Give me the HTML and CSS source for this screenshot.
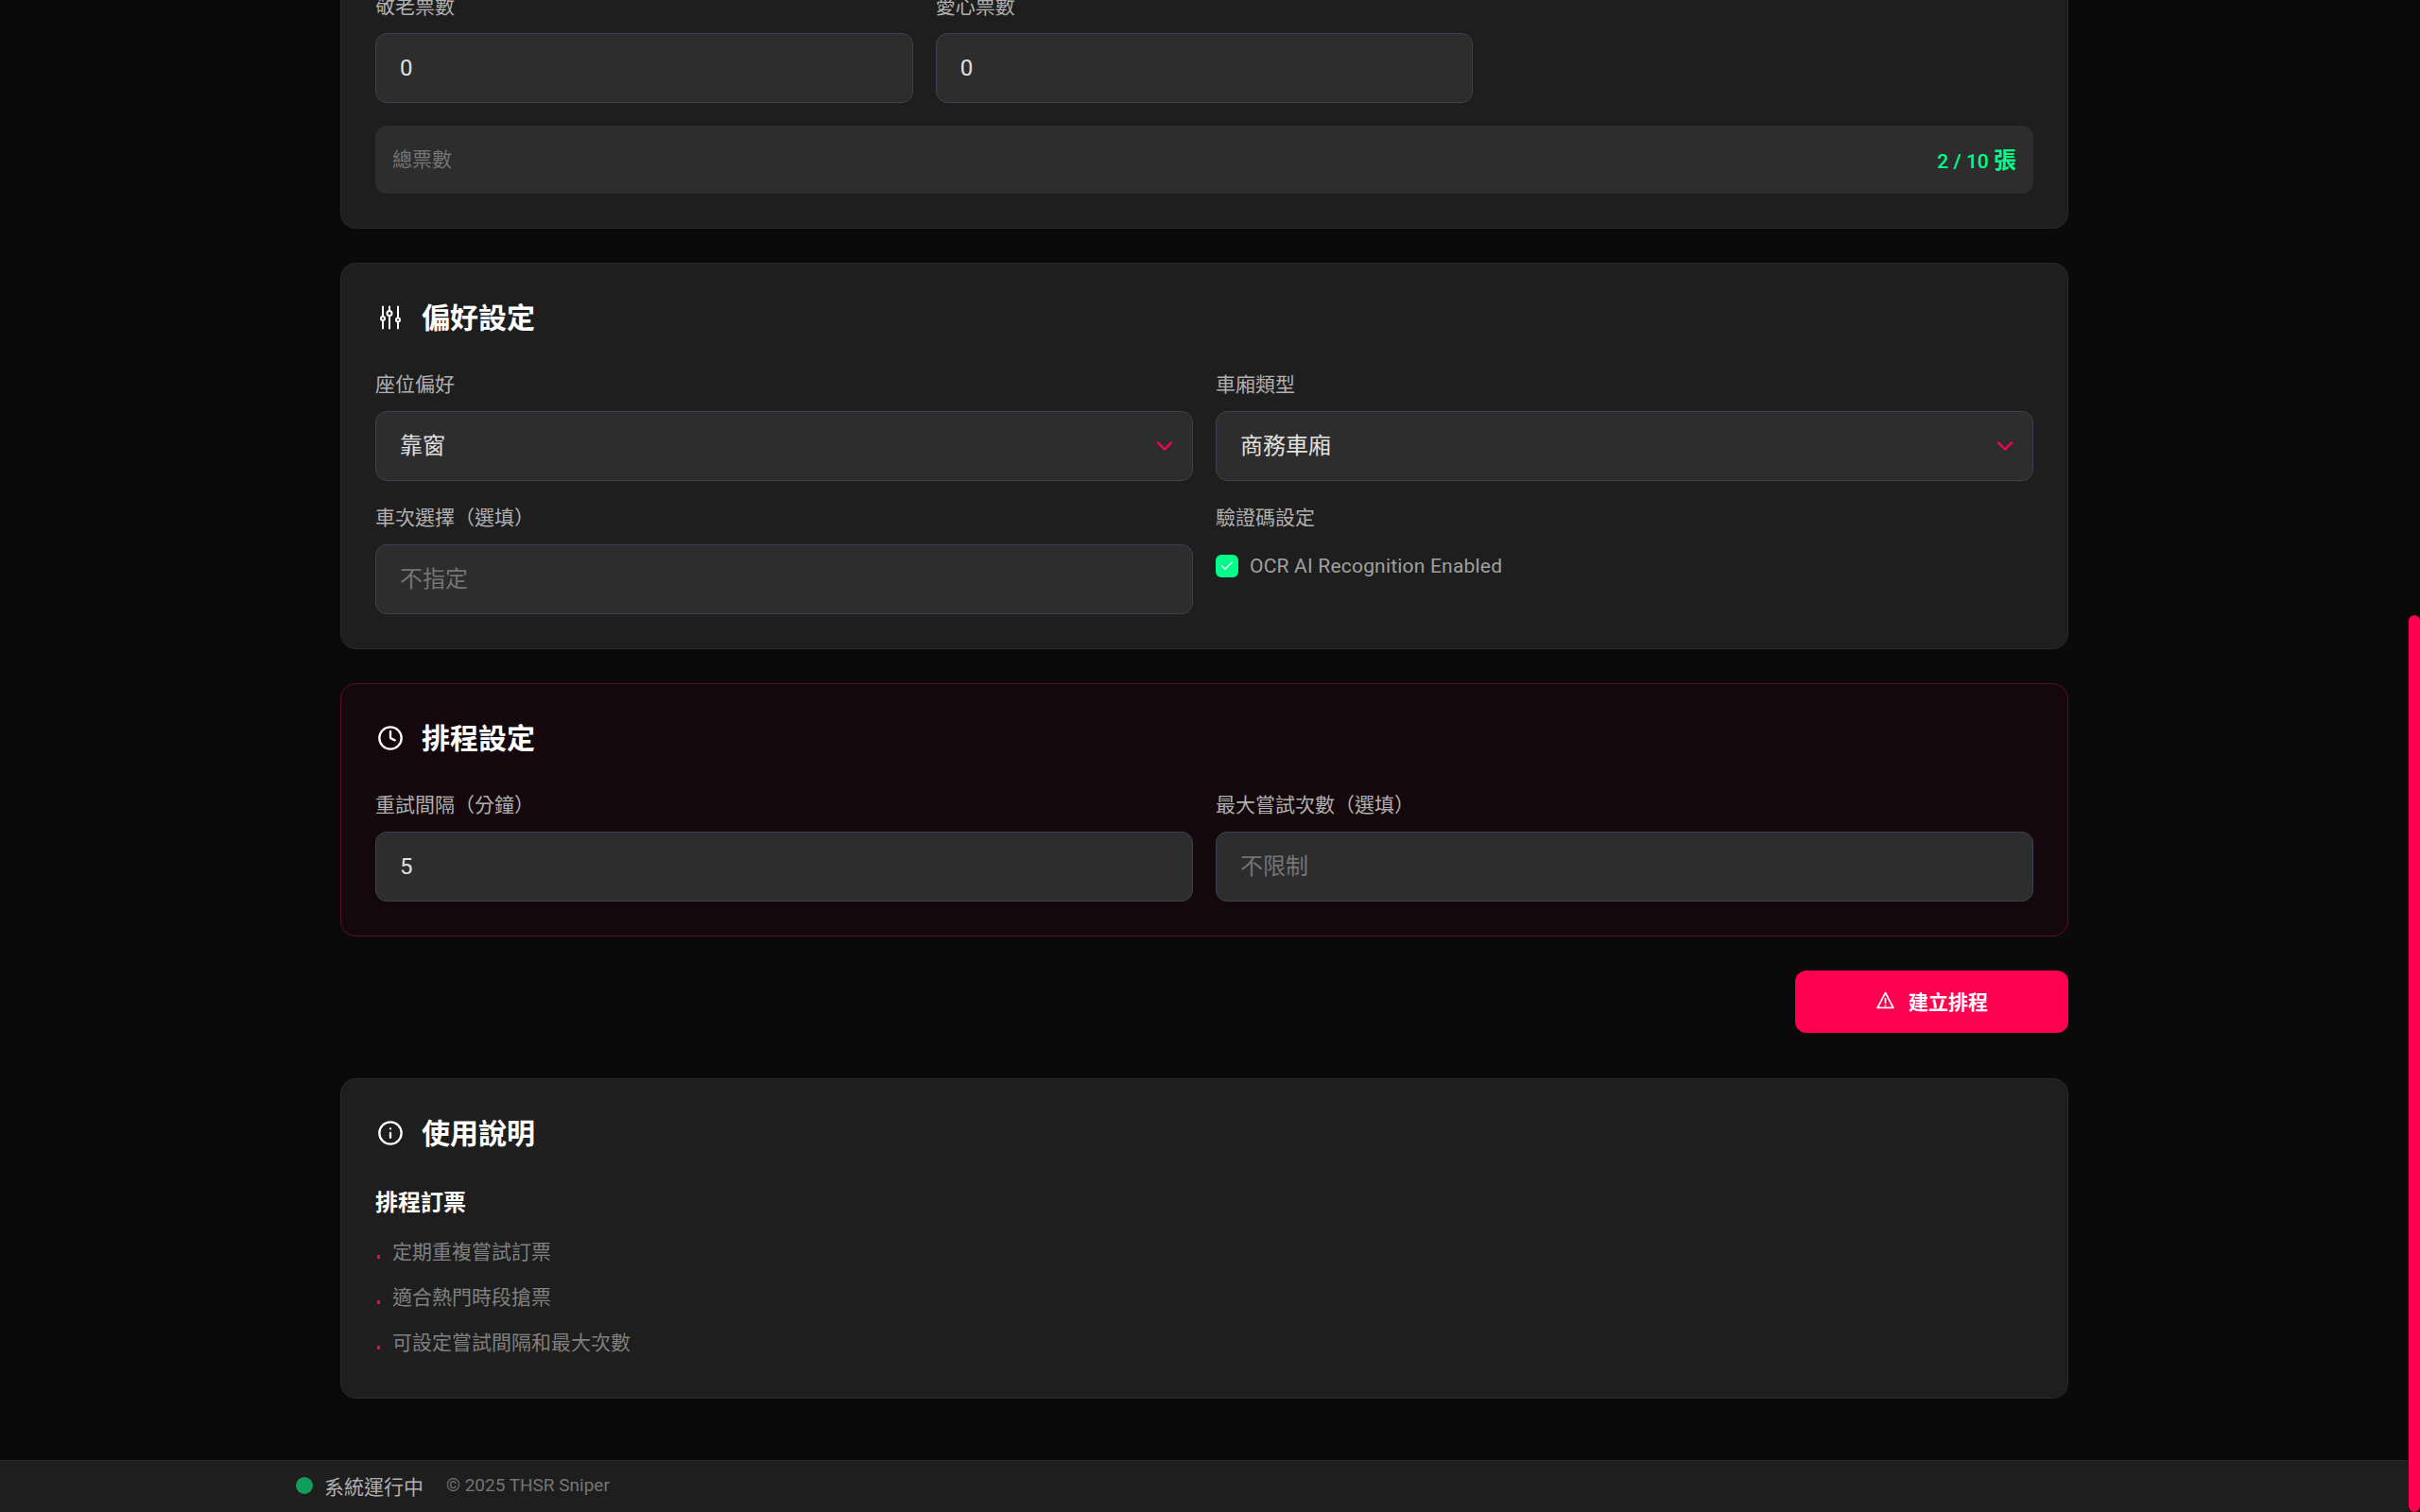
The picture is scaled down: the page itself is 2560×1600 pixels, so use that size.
FILE: index.html
```html
<!DOCTYPE html>
<html lang="zh-Hant">
<head>
    <meta charset="UTF-8">
    <meta name="viewport" content="width=device-width, initial-scale=1.0">
    <title>THSR Sniper</title>
    <link rel="stylesheet" href="styles.css">
</head>
<body>
    <div class="app">
        <main class="main">
            <div class="content">
                <section class="card card-tickets">
                    <div class="grid-3">
                        <div class="field">
                            <label>敬老票數</label>
                            <div class="input">0</div>
                        </div>
                        <div class="field">
                            <label>愛心票數</label>
                            <div class="input">0</div>
                        </div>
                    </div>
                    <div class="total">
                        <span class="total-label">總票數</span>
                        <span class="total-value">2 / 10 <span class="total-unit">張</span></span>
                    </div>
                </section>

                <section class="card">
                    <h2 class="card-title">
                        <svg class="icon" viewBox="0 0 28 28"><path d="M6 2.5v10M6 17.5v8M13 2.5V7M13 12v13.5M22 2.5v11M22 19v6.5"/><circle cx="6" cy="15" r="2"/><circle cx="13" cy="9.5" r="2.5"/><circle cx="22" cy="16.5" r="2"/></svg>
                        偏好設定
                    </h2>
                    <div class="grid-2">
                        <div class="field">
                            <label>座位偏好</label>
                            <div class="input select">靠窗
                                <svg class="chevron" viewBox="0 0 24 24"><path d="m6 9 6 6 6-6"/></svg>
                            </div>
                        </div>
                        <div class="field">
                            <label>車廂類型</label>
                            <div class="input select">商務車廂
                                <svg class="chevron" viewBox="0 0 24 24"><path d="m6 9 6 6 6-6"/></svg>
                            </div>
                        </div>
                        <div class="field">
                            <label>車次選擇（選填）</label>
                            <div class="input placeholder">不指定</div>
                        </div>
                        <div class="field">
                            <label>驗證碼設定</label>
                            <div class="check-row">
                                <span class="checkbox">
                                    <svg viewBox="0 0 24 24"><path d="M20 6 9 17l-5-5"/></svg>
                                </span>
                                <span>OCR AI Recognition Enabled</span>
                            </div>
                        </div>
                    </div>
                </section>

                <section class="card card-danger">
                    <h2 class="card-title">
                        <svg class="icon" viewBox="0 0 24 24"><circle cx="12" cy="12" r="10"/><path d="M12 6v6l4 2"/></svg>
                        排程設定
                    </h2>
                    <div class="grid-2">
                        <div class="field">
                            <label>重試間隔（分鐘）</label>
                            <div class="input">5</div>
                        </div>
                        <div class="field">
                            <label>最大嘗試次數（選填）</label>
                            <div class="input placeholder">不限制</div>
                        </div>
                    </div>
                </section>

                <div class="actions">
                    <button class="btn-primary" type="button">
                        <svg viewBox="0 0 24 24"><path d="M12 3 2.5 21h19z"/><path d="M12 10v5M12 18h.01"/></svg>
                        建立排程
                    </button>
                </div>

                <section class="card card-help">
                    <h2 class="card-title">
                        <svg class="icon" viewBox="0 0 24 24"><circle cx="12" cy="12" r="10"/><path d="M12 16v-4M12 8h.01"/></svg>
                        使用說明
                    </h2>
                    <h3 class="help-title">排程訂票</h3>
                    <ul class="help-list">
                        <li>定期重複嘗試訂票</li>
                        <li>適合熱門時段搶票</li>
                        <li>可設定嘗試間隔和最大次數</li>
                    </ul>
                </section>
            </div>
        </main>
        <footer class="footer">
            <span class="status-dot"></span>
            <span class="status-text">系統運行中</span>
            <span class="copyright">© 2025 THSR Sniper</span>
        </footer>
    </div>
    <div class="scrollbar"><div class="scrollbar-thumb"></div></div>
</body>
</html>
```

FILE: styles.css
```css
* {
    box-sizing: border-box;
}

html, body {
    height: 100%;
}

body {
    margin: 0;
    display: flex;
    height: 100vh;
    overflow: hidden;
    background-color: #0a0a0a;
    color: #fff;
    font-family: Roboto, "Noto Sans CJK TC", sans-serif;
    font-size: 21px;
}

.app {
    flex: 1;
    min-width: 0;
    display: flex;
    flex-direction: column;
}

.main {
    flex: 1;
    min-height: 0;
    overflow: hidden;
}

/* page is scrolled down, so the first card starts above the window */
.content {
    width: 1828px;
    margin: -45px auto 0;
    display: flex;
    flex-direction: column;
    gap: 36px;
}

.card {
    background-color: #1e1e1e;
    border: 1px solid #252a30;
    border-radius: 16px;
    padding: 36px;
}

.card-danger {
    background-color: #15080c;
    border-color: #5c0c2c;
}

.card-help {
    padding-bottom: 34px;
}

.card-title {
    display: flex;
    align-items: center;
    gap: 19px;
    height: 44px;
    margin: 0 0 33px;
    padding-bottom: 6px;
    font-size: 30px;
    font-weight: 700;
    color: #fff;
}

.icon {
    flex-shrink: 0;
    width: 28px;
    height: 28px;
    margin: 3px 0 0 2px;
    fill: none;
    stroke: #fff;
    stroke-width: 2;
    stroke-linecap: round;
    stroke-linejoin: round;
}

.grid-2, .grid-3 {
    display: grid;
    gap: 24px;
}

.grid-2 {
    grid-template-columns: 1fr 1fr;
}

.grid-3 {
    grid-template-columns: 1fr 1fr 1fr;
}

.field {
    min-width: 0;
}

.field label {
    display: block;
    height: 30px;
    line-height: 30px;
    margin-bottom: 13px;
    font-size: 21px;
    color: #b0b0b0;
}

.input {
    display: flex;
    align-items: center;
    justify-content: space-between;
    height: 74px;
    padding: 0 25px;
    background-color: #2d2d2d;
    border: 1px solid #3a4252;
    border-radius: 12px;
    font-size: 24px;
    color: #e0e0e0;
}

.select, .placeholder {
    padding-bottom: 5px;
}

.placeholder {
    color: #757575;
}

.chevron {
    width: 28px;
    height: 28px;
    margin: 5px -10px 0 0;
    fill: none;
    stroke: #ff0050;
    stroke-width: 2;
    stroke-linecap: round;
    stroke-linejoin: round;
}

.check-row {
    display: flex;
    align-items: center;
    gap: 12px;
    height: 24px;
    margin-top: 24px;
    color: #a0a0a0;
    letter-spacing: 0.2px;
}

.checkbox {
    display: flex;
    align-items: center;
    justify-content: center;
    width: 24px;
    height: 24px;
    background-color: #00ff88;
    border-radius: 6px;
}

.checkbox svg {
    width: 16px;
    height: 16px;
    fill: none;
    stroke: #fff;
    stroke-width: 2;
    stroke-linecap: round;
    stroke-linejoin: round;
}

.total {
    display: flex;
    align-items: center;
    justify-content: space-between;
    height: 72px;
    margin-top: 24px;
    padding: 0 18px 4px;
    background-color: #2d2d2d;
    border-radius: 12px;
}

.total-label {
    color: #757575;
}

.total-value {
    color: #00ff88;
    font-weight: 500;
}

.total-unit {
    font-size: 24px;
    font-weight: 700;
}

.actions {
    display: flex;
    justify-content: flex-end;
    margin-bottom: 12px;
}

.btn-primary {
    display: flex;
    align-items: center;
    justify-content: center;
    gap: 14px;
    width: 289px;
    height: 66px;
    padding: 0 0 3px;
    background-color: #ff0050;
    color: #fff;
    border: none;
    border-radius: 12px;
    font-family: inherit;
    font-size: 21px;
    font-weight: 700;
    cursor: pointer;
}

.btn-primary svg {
    width: 21px;
    height: 21px;
    fill: none;
    stroke: #fff;
    stroke-width: 2;
    stroke-linecap: round;
    stroke-linejoin: round;
}

.help-title {
    margin: 0 0 10px;
    font-size: 24px;
    font-weight: 700;
    line-height: 36px;
}

.help-list {
    list-style: none;
    margin: 0;
    padding: 0;
}

.help-list li {
    position: relative;
    height: 48px;
    line-height: 48px;
    padding-left: 18px;
    color: #808080;
}

.help-list li::before {
    content: "";
    position: absolute;
    left: 2px;
    top: 27px;
    width: 3px;
    height: 4px;
    background-color: #ff0050;
}

.footer {
    display: flex;
    align-items: center;
    height: 55px;
    flex-shrink: 0;
    padding: 0 0 3px 313px;
    background-color: #1e1e1e;
    border-top: 1px solid #252a30;
}

.status-dot {
    width: 18px;
    height: 18px;
    margin-right: 12px;
    border-radius: 50%;
    background-color: #0f9d58;
}

.status-text {
    margin-right: 24px;
    color: #b0b0b0;
}

.copyright {
    font-size: 19px;
    color: #757575;
}

.scrollbar {
    position: relative;
    width: 12px;
    flex-shrink: 0;
    background-color: #0a0a0a;
}

.scrollbar-thumb {
    position: absolute;
    top: 651px;
    bottom: 0;
    left: 0;
    right: 0;
    background-color: #ff0050;
    border-radius: 6px;
}
```
